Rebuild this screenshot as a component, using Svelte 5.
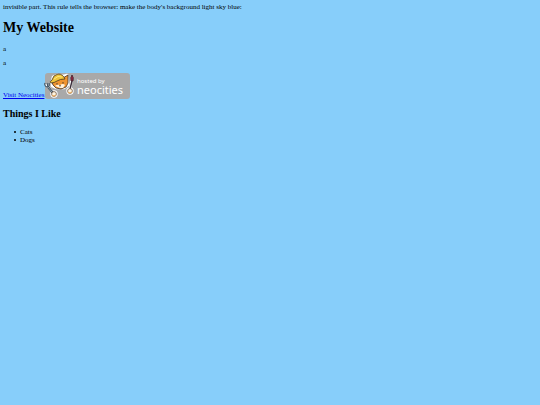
<script>
  const likes = ['Cats', 'Dogs'];
</script>

<svelte:head>
  <title>My Website</title>
</svelte:head>

<main>
  invisible part. This rule tells the browser: make the body's background light sky blue:
  <h1>My Website</h1>
  <p>a</p>
  <p>a</p>
  <div class="links">
    <a href="https://neocities.org">Visit Neocities</a>
    <a class="badge" href="https://neocities.org" aria-label="Hosted by Neocities">
      <svg width="86" height="26" viewBox="0 0 86 26" aria-hidden="true">
        <rect x="1" y="0" width="85" height="26" rx="3" fill="#a9a9a9" />
        <g stroke="#fff" stroke-width="2.6" stroke-linejoin="round" fill="#fff">
          <path d="M8 9 9 4 14 2 19 3 23 2 24 12 20 15 13 15 8 13Z" />
          <path d="M2 11 9 20M28 3 26 17" />
          <circle cx="10" cy="21" r="2.4" />
          <circle cx="26" cy="18" r="2.4" />
        </g>
        <path d="M8 9 9 12 12 15 17 16 22 14 24 10 24 2 19 5 12 5Z" fill="#ef942f" stroke="#413226" stroke-width="0.8" stroke-linejoin="round" />
        <path d="M11 13Q13 11 16 12Q19 10 21 12L19 15 16 15Z" fill="#fff2dc" />
        <path d="M8 7Q9 2 14 1Q19 1 21 6Q16 6 13 8Q10 10 7 10Q5 9 8 7Z" fill="#efc43a" stroke="#49391f" stroke-width="0.8" />
        <path d="M10 6Q14 2 18 4" fill="none" stroke="#ffe77a" stroke-width="1" />
        <path d="M13 10v1.6M19 9v1.6M15 12.4l1 0.8 1-0.8" fill="none" stroke="#352b29" stroke-width="0.8" />
        <path d="M4 14 9 20" fill="none" stroke="#34434f" stroke-width="2.2" />
        <path d="M1 10Q0 13 3 14Q6 14 5 10M3 10 4 14" fill="none" stroke="#405363" stroke-width="1.1" />
        <path d="M4 14 8 19" stroke="#a8bfcd" stroke-width="0.8" />
        <path d="M28 8 26 16" stroke="#3c303d" stroke-width="1.4" />
        <path d="M28 2Q30 4 29 8L27 8Q26 4 28 2Z" fill="#9c2740" stroke="#35242d" stroke-width="0.8" />
        <g fill="#fff4df" stroke="#5b4128" stroke-width="0.7">
          <circle cx="10" cy="21" r="2.4" />
          <circle cx="26" cy="18" r="2.4" />
        </g>
        <path d="M8 22.5Q10 24 12 22M24 19.5Q26 21 28 19" fill="none" stroke="#eba855" stroke-width="1" />
        <text class="hosted" x="33" y="10">hosted by</text>
        <text class="name" x="33" y="21">neocities</text>
      </svg>
    </a>
  </div>
  <h2>Things I Like</h2>
  <ul>
    {#each likes as item}
      <li>{item}</li>
    {/each}
  </ul>
</main>

<style>
  :global(body) {
    background: #87cefa;
  }

  main {
    padding: 3px;
    color: #000;
    font-family: "Liberation Serif", "Times New Roman", serif;
    font-size: 7px;
    line-height: 8px;
  }

  h1 {
    margin: 9px 0;
    font-size: 14px;
    line-height: 16px;
  }

  h2 {
    margin: 9px 0 8px;
    font-size: 10px;
    line-height: 12px;
  }

  p {
    margin: 0 0 6px;
  }

  a {
    color: #0000ee;
  }

  .links {
    display: flex;
    align-items: flex-end;
  }

  .badge,
  svg {
    display: block;
  }

  text {
    fill: #fff;
    font-family: "Noto Sans", "Open Sans", sans-serif;
  }

  .hosted {
    font-size: 6px;
  }

  .name {
    font-size: 11px;
  }

  ul {
    margin: 0;
    padding: 0;
    list-style: none;
  }

  li {
    display: flex;
    align-items: center;
    gap: 4px;
    padding-left: 11px;
  }

  li::before {
    width: 2px;
    height: 2px;
    border-radius: 1px;
    background: #000;
    content: "";
  }
</style>
